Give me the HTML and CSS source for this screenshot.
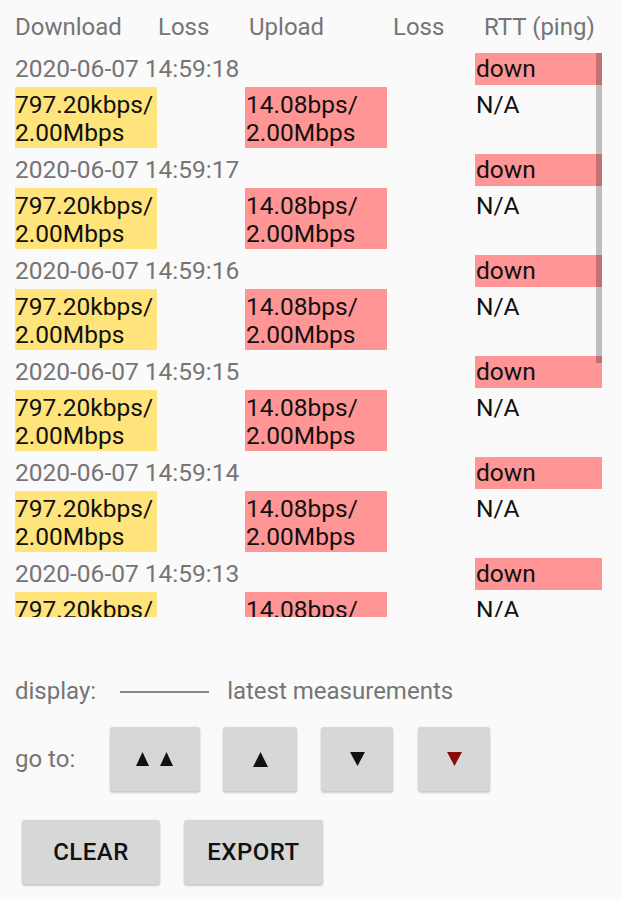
FILE: index.html
```html
<!DOCTYPE html>
<html>
<head>
<meta charset="utf-8">
<link rel="stylesheet" href="styles.css">
</head>
<body>
<div class="screen">
  <div class="head">
    <span class="h-dl">Download</span>
    <span class="h-loss1">Loss</span>
    <span class="h-ul">Upload</span>
    <span class="h-loss2">Loss</span>
    <span class="h-rtt">RTT (ping)</span>
  </div>

  <div class="list">
    <div class="scrollbar"></div>

    <div class="rec">
      <div class="ts">2020-06-07 14:59:18</div>
      <div class="rtt down">down</div>
      <div class="val dl">797.20kbps/<br>2.00Mbps</div>
      <div class="val ul">14.08bps/<br>2.00Mbps</div>
      <div class="val na">N/A</div>
    </div>
    <div class="rec">
      <div class="ts">2020-06-07 14:59:17</div>
      <div class="rtt down">down</div>
      <div class="val dl">797.20kbps/<br>2.00Mbps</div>
      <div class="val ul">14.08bps/<br>2.00Mbps</div>
      <div class="val na">N/A</div>
    </div>
    <div class="rec">
      <div class="ts">2020-06-07 14:59:16</div>
      <div class="rtt down">down</div>
      <div class="val dl">797.20kbps/<br>2.00Mbps</div>
      <div class="val ul">14.08bps/<br>2.00Mbps</div>
      <div class="val na">N/A</div>
    </div>
    <div class="rec">
      <div class="ts">2020-06-07 14:59:15</div>
      <div class="rtt down">down</div>
      <div class="val dl">797.20kbps/<br>2.00Mbps</div>
      <div class="val ul">14.08bps/<br>2.00Mbps</div>
      <div class="val na">N/A</div>
    </div>
    <div class="rec">
      <div class="ts">2020-06-07 14:59:14</div>
      <div class="rtt down">down</div>
      <div class="val dl">797.20kbps/<br>2.00Mbps</div>
      <div class="val ul">14.08bps/<br>2.00Mbps</div>
      <div class="val na">N/A</div>
    </div>
    <div class="rec">
      <div class="ts">2020-06-07 14:59:13</div>
      <div class="rtt down">down</div>
      <div class="val dl">797.20kbps/<br>2.00Mbps</div>
      <div class="val ul">14.08bps/<br>2.00Mbps</div>
      <div class="val na">N/A</div>
    </div>
  </div>

  <div class="display-row">
    <span class="lbl">display:</span>
    <span class="dash"></span>
    <span class="lbl">latest measurements</span>
  </div>

  <div class="goto-row">
    <span class="lbl goto-lbl">go to:</span>
    <button class="btn nav w90">
      <svg width="38" height="14" viewBox="0 0 38 14"><polygon points="0,14 6.5,0 13,14" fill="#111"/><polygon points="24,14 30.5,0 37,14" fill="#111"/></svg>
    </button>
    <button class="btn nav w74">
      <svg width="15" height="15" viewBox="0 0 15 15"><polygon points="0,15 7.5,0 15,15" fill="#111"/></svg>
    </button>
    <button class="btn nav w72">
      <svg width="15" height="14" viewBox="0 0 15 14"><polygon points="0,0 15,0 7.5,14" fill="#111"/></svg>
    </button>
    <button class="btn nav w72">
      <svg width="15" height="14" viewBox="0 0 15 14"><polygon points="0,0 15,0 7.5,14" fill="#8b0a0a"/></svg>
    </button>
  </div>

  <div class="action-row">
    <button class="btn act w138">CLEAR</button>
    <button class="btn act w139">EXPORT</button>
  </div>
</div>
</body>
</html>
```

FILE: styles.css
```css
html, body {
  margin: 0;
  padding: 0;
  background: #fafafa;
}

.screen {
  width: 622px;
  height: 900px;
  overflow: hidden;
  font-family: Roboto, "Noto Sans", sans-serif;
  font-size: 24.5px;
  color: #111;
}

.head {
  display: flex;
  padding-top: 13px;
  height: 28px;
  line-height: 28px;
  font-size: 24px;
  color: #757575;
  margin-bottom: 12px;
}
.h-dl { margin-left: 15px; width: 143px; }
.h-loss1 { width: 91px; }
.h-ul { width: 144px; }
.h-loss2 { width: 91px; }

.list {
  position: relative;
  height: 564px;
  overflow: hidden;
}

.scrollbar {
  position: absolute;
  left: 596px;
  top: 0;
  width: 6px;
  height: 310px;
  background: rgba(0, 0, 0, 0.24);
  z-index: 2;
}

.rec {
  display: grid;
  grid-template-columns: 142px 88px 142px 88px 127px;
  grid-template-rows: 32px 61px;
  row-gap: 2px;
  padding-left: 15px;
  margin-bottom: 6px;
}

.ts {
  grid-column: 1 / 5;
  line-height: 32px;
  color: #757575;
  white-space: nowrap;
}

.rtt {
  grid-column: 5;
  line-height: 32px;
  padding-left: 1px;
}
.down { background: #ff9595; }

.val {
  line-height: 28px;
  padding-top: 4px;
  box-sizing: border-box;
  height: 61px;
}
.dl { grid-column: 1; background: #ffe47c; }
.ul { grid-column: 3; background: #ff9595; padding-left: 1px; }
.na { grid-column: 5; padding-left: 1px; }

.lbl { color: #757575; line-height: 28px; }

.display-row {
  display: flex;
  align-items: center;
  margin-top: 60px;
  padding-left: 15px;
  height: 28px;
  font-size: 24px;
}
.dash {
  width: 89px;
  height: 2px;
  background: #8a8a8a;
  margin: 2px 18px 0 24px;
}

.goto-row {
  display: flex;
  align-items: center;
  margin-top: 22px;
  padding-left: 15px;
  height: 64px;
  font-size: 24px;
}
.goto-lbl { width: 95px; }

.btn {
  border: none;
  border-radius: 3px;
  background: #d6d7d7;
  box-shadow: 0 2px 2px rgba(0, 0, 0, 0.18), 0 0 2px rgba(0, 0, 0, 0.1);
  height: 64px;
  padding: 0;
  display: flex;
  align-items: center;
  justify-content: center;
  font-family: Roboto, "Noto Sans", sans-serif;
}
.nav { margin-right: 23px; }
.w90 { width: 90px; }
.w74 { width: 74px; margin-right: 24px; }
.w72 { width: 72px; margin-right: 25px; }

.action-row {
  display: flex;
  margin-top: 29px;
  padding-left: 22px;
  gap: 24px;
}
.act {
  font-size: 24px;
  font-weight: 500;
  color: #111;
  letter-spacing: 0.5px;
}
.w138 { width: 138px; }
.w139 { width: 139px; }
```
